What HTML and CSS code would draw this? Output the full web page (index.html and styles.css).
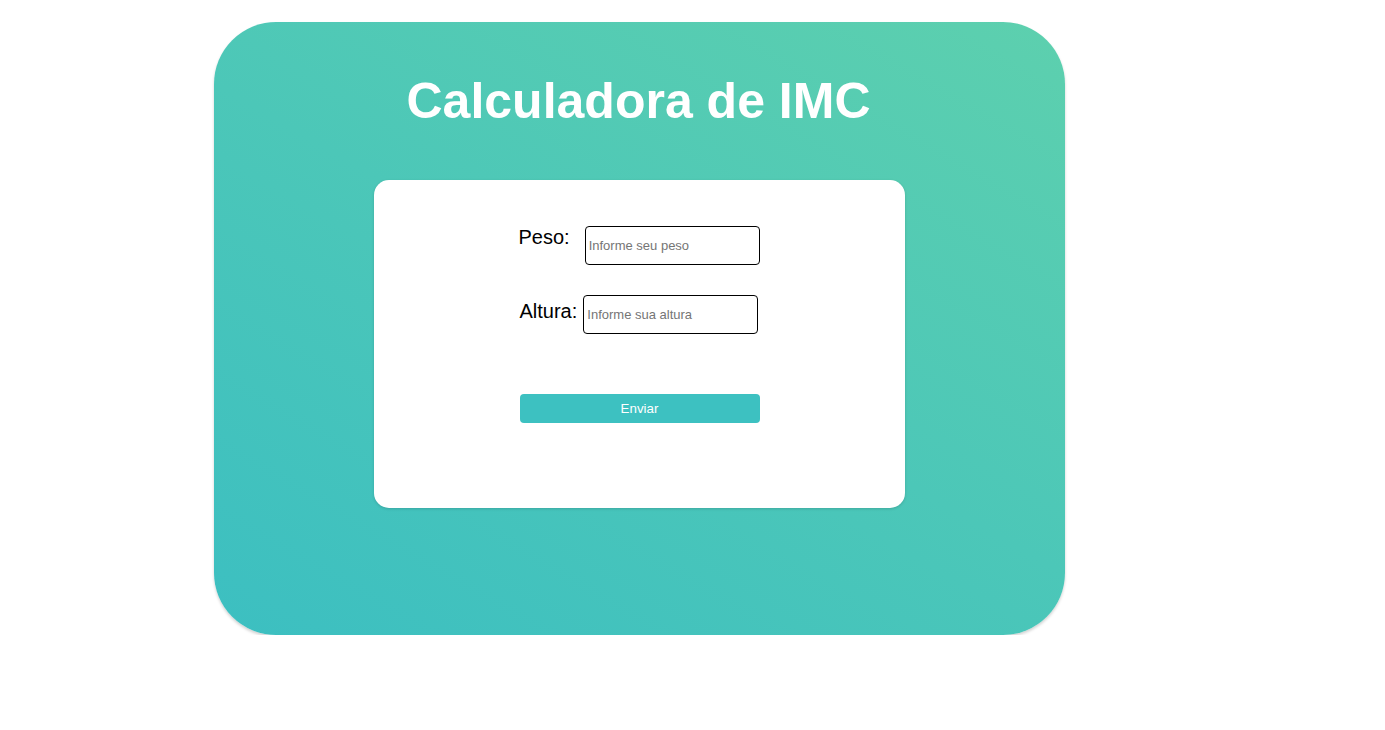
FILE: index.html
```html
<!DOCTYPE html>
<html lang="pt-BR">
<head>
<meta charset="utf-8">
<title>Calculadora de IMC</title>
<link rel="stylesheet" href="styles.css">
</head>
<body>
<main class="container">
  <h1 class="title">Calculadora de IMC</h1>
  <section class="card">
    <form class="form">
      <div class="row">
        <label class="label label-peso" for="peso">Peso:</label>
        <input class="field" id="peso" type="text" placeholder="Informe seu peso">
      </div>
      <div class="row">
        <label class="label label-altura" for="altura">Altura:</label>
        <input class="field" id="altura" type="text" placeholder="Informe sua altura">
      </div>
      <button class="btn" type="button">Enviar</button>
    </form>
  </section>
</main>
</body>
</html>
```

FILE: styles.css
```css
* { box-sizing: border-box; }

body {
  margin: 0;
  padding: 22px 0 0 214px;
  background: #ffffff;
  font-family: "Liberation Sans", Arial, sans-serif;
}

.container {
  width: 851px;
  height: 613px;
  border-radius: 62px;
  background: linear-gradient(30deg, #3cbfc1 0%, #4cc7b8 50%, #5dd0ae 100%);
  box-shadow: 0 2px 3px rgba(0, 0, 0, 0.18);
  padding-top: 51px;
  display: flex;
  flex-direction: column;
  align-items: center;
}

.title {
  margin: 0;
  font-size: 50px;
  font-weight: bold;
  color: #ffffff;
  line-height: 57px;
  text-align: center;
  padding-right: 2px;
}

.card {
  margin-top: 50px;
  width: 531px;
  height: 328px;
  background: #ffffff;
  border-radius: 15px;
  box-shadow: 0 1px 3px rgba(0, 0, 0, 0.15);
  display: flex;
  justify-content: center;
  padding-top: 46px;
}

.form {
  width: 240px;
  display: flex;
  flex-direction: column;
}

.row {
  display: flex;
  align-items: flex-start;
  height: 39px;
  margin-bottom: 30px;
}

.label {
  font-size: 20px;
  line-height: 23px;
  color: #000000;
}

.label-peso {
  margin-top: 0;
  margin-left: -1px;
  margin-right: 15px;
}

.label-altura {
  margin-top: 5px;
  margin-right: 6px;
}

.field {
  width: 175px;
  height: 39px;
  border: 1px solid #000000;
  border-radius: 4px;
  padding: 1px 3px;
  font-family: "Liberation Sans", Arial, sans-serif;
  font-size: 13px;
  color: #000;
  background: #fff;
}

.field::placeholder { color: #757575; }

.btn {
  margin-top: 30px;
  width: 240px;
  height: 29px;
  border: none;
  border-radius: 4px;
  background: #3dc1c1;
  color: #ffffff;
  font-family: "Liberation Sans", Arial, sans-serif;
  font-size: 13.33px;
  cursor: pointer;
}
```
